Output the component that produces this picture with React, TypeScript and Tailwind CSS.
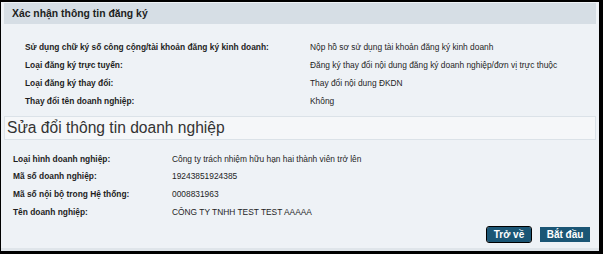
import React from "react";

const confirmRows = [
  ["Sử dụng chữ ký số công cộng/tài khoản đăng ký kinh doanh:", "Nộp hồ sơ sử dụng tài khoản đăng ký kinh doanh"],
  ["Loại đăng ký trực tuyến:", "Đăng ký thay đổi nội dung đăng ký doanh nghiệp/đơn vị trực thuộc"],
  ["Loại đăng ký thay đổi:", "Thay đổi nội dung ĐKDN"],
  ["Thay đổi tên doanh nghiệp:", "Không"],
];

const companyRows = [
  ["Loại hình doanh nghiệp:", "Công ty trách nhiệm hữu hạn hai thành viên trở lên"],
  ["Mã số doanh nghiệp:", "19243851924385"],
  ["Mã số nội bộ trong Hệ thống:", "0008831963"],
  ["Tên doanh nghiệp:", "CÔNG TY TNHH TEST TEST AAAAA"],
];

export default function App() {
  return (
    <div className="w-[603px] h-[254px] bg-black pt-[2px] pl-[1px] pr-[4px] pb-[3px] font-['Liberation_Sans',Arial,sans-serif] text-[#1e1e1e]">
      <div className="h-full bg-[#eef2f6] border-b-[3px] border-[#dfe5ea] px-[3px] pt-[1px] flex flex-col">
        <div className="h-[21px] bg-[#d6dee5] flex items-center pl-[8px] text-[10.4px] font-bold">
          Xác nhận thông tin đăng ký
        </div>

        <div className="pt-[14px] pl-[21px] flex flex-col">
          {confirmRows.map(([label, value]) => (
            <div key={label} className="h-[18px] flex items-center text-[8.4px]">
              <div className="w-[285px] font-semibold">{label}</div>
              <div>{value}</div>
            </div>
          ))}
        </div>

        <div className="mt-[6px] h-[24px] bg-[#f5f7f9] border border-[#dbe2e8] flex items-center pl-[2px] text-[15.6px] text-[#333]">
          Sửa đổi thông tin doanh nghiệp
        </div>

        <div className="pt-[10px] pl-[9px] flex flex-col">
          {companyRows.map(([label, value]) => (
            <div key={label} className="h-[17.7px] flex items-center text-[8.4px]">
              <div className="w-[159px] font-semibold">{label}</div>
              <div>{value}</div>
            </div>
          ))}
        </div>

        <div className="mt-[6px] flex justify-end gap-[9px] pr-[6px]">
          <button className="h-[15px] w-[44px] bg-[#1b5675] text-white text-[10px] font-semibold rounded-[2px] outline outline-[1.5px] outline-black flex items-center justify-center">
            Trở về
          </button>
          <button className="h-[15px] w-[50px] bg-[#1b5675] text-white text-[10px] font-semibold flex items-center justify-center">
            Bắt đầu
          </button>
        </div>
      </div>
    </div>
  );
}
